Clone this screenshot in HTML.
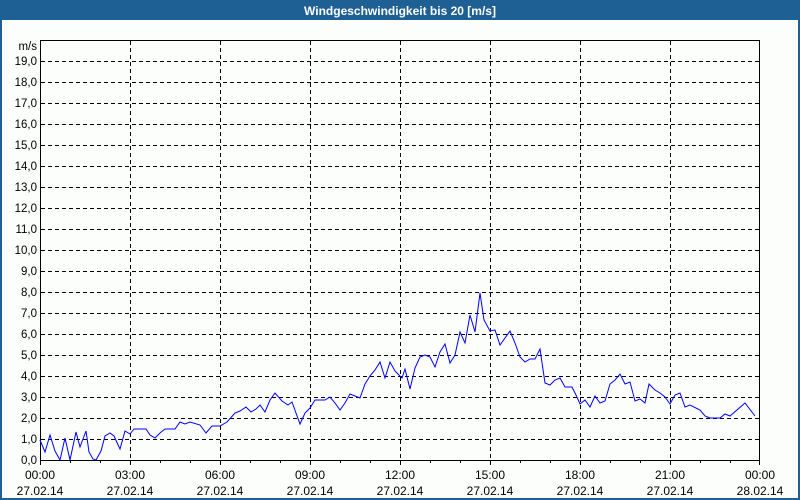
<!DOCTYPE html>
<html><head><meta charset="utf-8"><style>
html,body{margin:0;padding:0;background:#fff;}
body{width:800px;height:500px;position:relative;overflow:hidden;font-family:"Liberation Sans",sans-serif;}
</style></head><body>
<svg width="800" height="500" xmlns="http://www.w3.org/2000/svg" style="position:absolute;left:0;top:0">
<rect x="0" y="0" width="800" height="500" fill="#1e5f94"/>
<rect x="2" y="20" width="796" height="478" fill="#fcfefc"/>
<text x="400" y="15" fill="#fff" font-size="12" font-weight="bold" text-anchor="middle" font-family="Liberation Sans, sans-serif">Windgeschwindigkeit bis 20 [m/s]</text>
<g stroke="#000" stroke-width="1" stroke-dasharray="4,3" fill="none">
<path d="M41 61.5H760M41 82.5H760M41 103.5H760M41 124.5H760M41 145.5H760M41 166.5H760M41 187.5H760M41 208.5H760M41 229.5H760M41 250.5H760M41 271.5H760M41 292.5H760M41 313.5H760M41 334.5H760M41 355.5H760M41 376.5H760M41 397.5H760M41 418.5H760M41 439.5H760"/>
<path d="M130.5 41V460M220.5 41V460M310.5 41V460M400.5 41V460M490.5 41V460M580.5 41V460M670.5 41V460"/>
</g>
<rect x="40.5" y="40.5" width="719" height="420" fill="none" stroke="#000" stroke-width="1"/>
<g stroke="#000" stroke-width="1">
<path d="M40.5 461v4M70.5 461v2M100.5 461v2M130.5 461v4M160.5 461v2M190.5 461v2M220.5 461v4M250.5 461v2M280.5 461v2M310.5 461v4M340.5 461v2M370.5 461v2M400.5 461v4M430.5 461v2M460.5 461v2M490.5 461v4M520.5 461v2M550.5 461v2M580.5 461v4M610.5 461v2M640.5 461v2M670.5 461v4M700.5 461v2M730.5 461v2M759.5 461v4"/>
</g>
<g font-size="11.5" fill="#000" text-anchor="end" font-family="Liberation Sans, sans-serif">
<text x="37" y="50">m/s</text>
<text x="37" y="65">19,0</text><text x="37" y="86">18,0</text><text x="37" y="107">17,0</text><text x="37" y="128">16,0</text><text x="37" y="149">15,0</text><text x="37" y="170">14,0</text><text x="37" y="191">13,0</text><text x="37" y="212">12,0</text><text x="37" y="233">11,0</text><text x="37" y="254">10,0</text><text x="37" y="275">9,0</text><text x="37" y="296">8,0</text><text x="37" y="317">7,0</text><text x="37" y="338">6,0</text><text x="37" y="359">5,0</text><text x="37" y="380">4,0</text><text x="37" y="401">3,0</text><text x="37" y="422">2,0</text><text x="37" y="443">1,0</text><text x="37" y="464">0,0</text>
</g>
<g font-size="12" fill="#000" text-anchor="middle" font-family="Liberation Sans, sans-serif">
<text x="40" y="479">00:00</text><text x="40" y="495">27.02.14</text>
<text x="130" y="479">03:00</text><text x="130" y="495">27.02.14</text>
<text x="220" y="479">06:00</text><text x="220" y="495">27.02.14</text>
<text x="310" y="479">09:00</text><text x="310" y="495">27.02.14</text>
<text x="400" y="479">12:00</text><text x="400" y="495">27.02.14</text>
<text x="490" y="479">15:00</text><text x="490" y="495">27.02.14</text>
<text x="580" y="479">18:00</text><text x="580" y="495">27.02.14</text>
<text x="670" y="479">21:00</text><text x="670" y="495">27.02.14</text>
<text x="760" y="479">00:00</text><text x="760" y="495">28.02.14</text>
</g>
<polyline fill="none" stroke="#0000ff" stroke-width="1" points="40,440 45,452 50,435 55,451 60,460 65,438 70,460 76,432 80,447 86,431 89,452 93,459 96,460 101,451 105,436 110,433 114,436 120,449 125,431 130,434 134,429 140,429 146,429 150,435 155,438 160,433 165,429 175,429 180,422 185,424 190,422 200,425 206,433 212,426 220,426 227,422 235,413 240,411 246,407 251,412 256,409 260,405 265,412 270,400 275,393 282,401 288,405 292,402 300,424 305,413 310,408 315,400 325,400 330,397 335,403 340,410 345,403 350,394 355,396 360,398 365,384 370,376 375,370 380,362 385,378 390,362 395,371 400,376 402,378 405,369 410,389 415,368 420,357 425,355 430,357 435,367 440,352 445,344 450,363 455,355 460,332 465,343 470,315 475,332 480,293 484,320 490,331 495,330 500,345 505,338 510,331 515,343 520,357 525,362 530,359 535,359 540,349 545,383 550,385 555,380 560,378 565,387 572,387 576,395 580,404 585,400 590,407 595,396 600,403 605,401 610,384 615,380 620,374 625,384 630,382 635,401 640,399 645,403 649,384 655,390 660,393 665,397 670,404 675,395 680,393 685,407 690,405 700,410 705,416 710,418 720,418 725,414 730,416 745,403 755,416"/>
</svg>
</body></html>
